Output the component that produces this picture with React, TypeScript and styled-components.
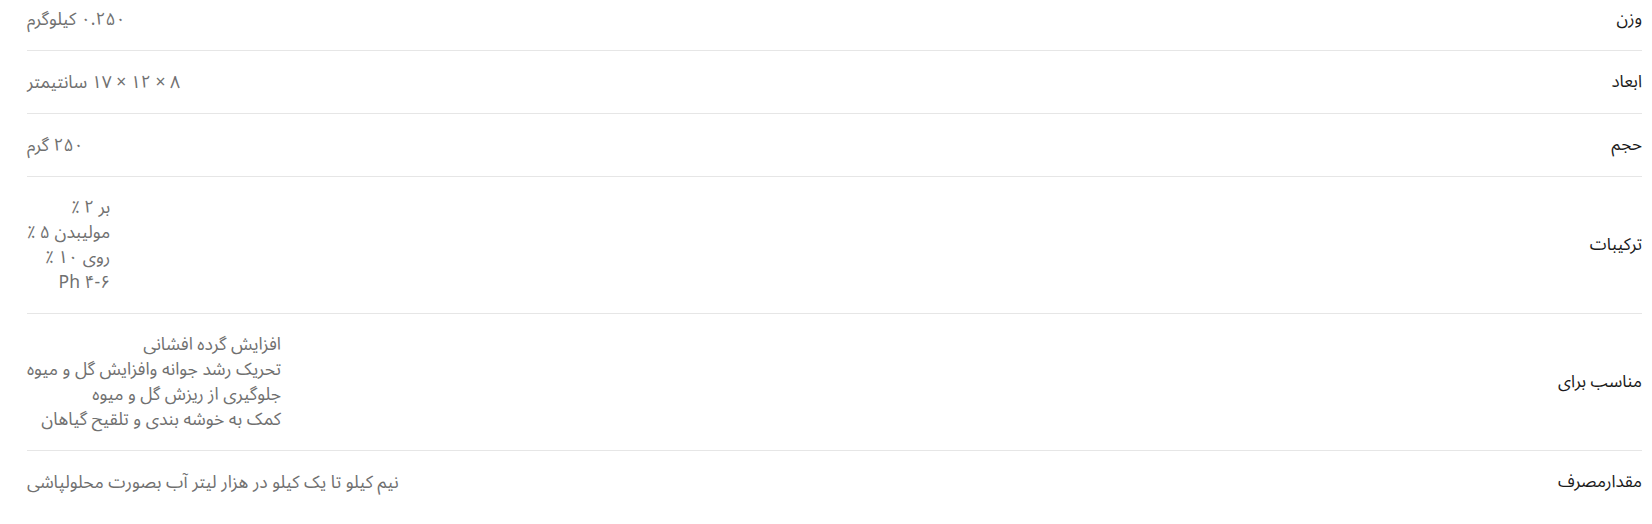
import React from 'react';
import styled, { createGlobalStyle } from 'styled-components';

const GlobalStyle = createGlobalStyle`
  html, body {
    margin: 0;
    padding: 0;
    background: #ffffff;
    overflow: hidden;
  }
  body {
    font-family: "Noto Sans Arabic", "Vazirmatn", "DejaVu Sans", sans-serif;
  }
`;

const Wrapper = styled.div`
  direction: rtl;
  padding: 0 10px 0 27px;
  margin-top: -12px;
`;

const Row = styled.div`
  display: flex;
  justify-content: space-between;
  align-items: center;
  padding: 18px 0;
  border-bottom: 1px solid #e6e6e6;

  &:last-child {
    border-bottom: none;
  }
`;

const Label = styled.div`
  font-size: 17px;
  line-height: 26px;
  font-weight: 400;
  color: #1a1a1a;
  white-space: nowrap;
`;

const Value = styled.div`
  font-size: 17.5px;
  color: #707070;
  text-align: right;
  white-space: nowrap;
`;

const Line = styled.div`
  line-height: 25px;
  height: 25px;
`;

interface Spec {
    label: string;
    lines: string[];
}

const specs: Spec[] = [
    { label: 'وزن', lines: ['۰.۲۵۰ کیلوگرم'] },
    { label: 'ابعاد', lines: ['۸ × ۱۲ × ۱۷ سانتیمتر'] },
    { label: 'حجم', lines: ['۲۵۰ گرم'] },
    { label: 'ترکیبات', lines: ['بر ۲ ٪', 'مولیبدن ۵ ٪', 'روی ۱۰ ٪', 'Ph ۴-۶'] },
    {
        label: 'مناسب برای',
        lines: [
            'افزایش گرده افشانی',
            'تحریک رشد جوانه وافزایش گل و میوه',
            'جلوگیری از ریزش گل و میوه',
            'کمک به خوشه بندی و تلقیح گیاهان',
        ],
    },
    { label: 'مقدارمصرف', lines: ['نیم کیلو تا یک کیلو در هزار لیتر آب بصورت محلولپاشی'] },
];

function App() {
    return (
        <>
            <GlobalStyle />
            <Wrapper>
                {specs.map((spec) => (
                    <Row key={spec.label}>
                        <Label>{spec.label}</Label>
                        <Value>
                            {spec.lines.map((line) => (
                                <Line key={line}>{line}</Line>
                            ))}
                        </Value>
                    </Row>
                ))}
            </Wrapper>
        </>
    );
}

export default App;
